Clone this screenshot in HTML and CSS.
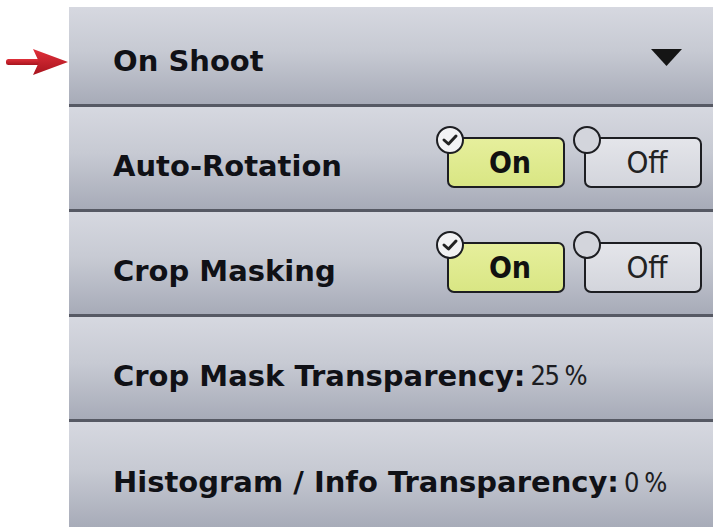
FILE: index.html
```html
<!DOCTYPE html>
<html lang="en">
<head>
<meta charset="utf-8">
<title>On Shoot settings</title>
<link rel="stylesheet" href="styles.css">
</head>
<body>
<div class="page">
  <div class="gutter">
    <svg class="pointer" width="66" height="28" viewBox="0 0 66 28">
      <defs>
        <linearGradient id="arrowFill" x1="0" y1="0" x2="0" y2="1">
          <stop offset="0" stop-color="#e0303a"/>
          <stop offset="1" stop-color="#a8141e"/>
        </linearGradient>
      </defs>
      <rect x="3" y="11" width="34" height="6" rx="2.5" fill="url(#arrowFill)"/>
      <path d="M30 1 L65 14 L30 27 L36 14 Z" fill="url(#arrowFill)"/>
    </svg>
  </div>
  <div class="panel">
    <div class="row row-head">
      <span class="label">On Shoot</span>
      <svg class="caret" width="32" height="18" viewBox="0 0 32 18"><path d="M0 0 H31 L15.5 17 Z" fill="#151515"/></svg>
    </div>
    <div class="row">
      <span class="label">Auto-Rotation</span>
      <div class="switch">
        <div class="opt opt-on"><span class="knob knob-on"><svg width="24" height="24" viewBox="0 0 24 24"><path d="M6 12 L10.5 16 L18 8" fill="none" stroke="#222" stroke-width="3" stroke-linecap="round" stroke-linejoin="round"/></svg></span>On</div>
        <div class="opt opt-off"><span class="knob"></span>Off</div>
      </div>
    </div>
    <div class="row">
      <span class="label">Crop Masking</span>
      <div class="switch">
        <div class="opt opt-on"><span class="knob knob-on"><svg width="24" height="24" viewBox="0 0 24 24"><path d="M6 12 L10.5 16 L18 8" fill="none" stroke="#222" stroke-width="3" stroke-linecap="round" stroke-linejoin="round"/></svg></span>On</div>
        <div class="opt opt-off"><span class="knob"></span>Off</div>
      </div>
    </div>
    <div class="row">
      <span class="label">Crop Mask Transparency:</span><span class="value">25 %</span>
    </div>
    <div class="row row-last">
      <span class="label">Histogram / Info Transparency:</span><span class="value">0 %</span>
    </div>
  </div>
</div>
</body>
</html>
```
FILE: styles.css
```css
html, body {
  margin: 0;
  padding: 0;
  background: #ffffff;
}

.page {
  display: flex;
  align-items: flex-start;
  padding-top: 7px;
  height: 521px;
  overflow: hidden;
}

.gutter {
  width: 69px;
  flex: none;
}

.pointer {
  display: block;
  margin-top: 41px;
  margin-left: 3px;
}

.panel {
  width: 644px;
  flex: none;
  display: flex;
  flex-direction: column;
}

.row {
  box-sizing: border-box;
  height: 105px;
  padding: 15px 0 0 44px;
  display: flex;
  align-items: center;
  background: linear-gradient(to bottom, #d6d8e0 0%, #c7cad3 45%, #a7abb8 100%);
  border-bottom: 3px solid #565964;
  font-family: "DejaVu Sans", sans-serif;
  color: #101116;
}

.row-head {
  height: 100px;
  padding-top: 11px;
}

.row-last {
  border-bottom: none;
}

.label {
  font-weight: bold;
  font-size: 29px;
  white-space: nowrap;
}

.value {
  font-family: "DejaVu Sans Condensed", "DejaVu Sans", sans-serif;
  font-size: 27px;
  letter-spacing: -1.5px;
  margin-left: 5px;
  color: #1c1d22;
  white-space: nowrap;
}

.caret {
  margin-left: auto;
  margin-right: 30px;
  margin-bottom: 7px;
  display: block;
}

.switch {
  margin-left: auto;
  margin-right: 11px;
  margin-bottom: 7px;
  display: flex;
  gap: 19px;
}

.opt {
  position: relative;
  box-sizing: border-box;
  width: 118px;
  height: 51px;
  border: 2.5px solid #1d1e22;
  border-radius: 7px;
  display: flex;
  align-items: center;
  justify-content: center;
  padding-left: 8px;
  font-family: "DejaVu Sans Condensed", "DejaVu Sans", sans-serif;
}

.opt-on {
  background: linear-gradient(to bottom, #e6ef9c, #d9e684);
  font-weight: bold;
  font-size: 30px;
  color: #111;
}

.opt-off {
  background: linear-gradient(to bottom, #e4e5ea, #d3d5dc);
  font-size: 31px;
  color: #222;
}

.knob {
  position: absolute;
  left: -13px;
  top: -13px;
  box-sizing: border-box;
  width: 28px;
  height: 28px;
  border-radius: 50%;
  border: 2px solid #1d1e22;
  background: #d3d5dc;
  display: flex;
  align-items: center;
  justify-content: center;
}

.knob-on {
  background: #f2f2f4;
}
```
